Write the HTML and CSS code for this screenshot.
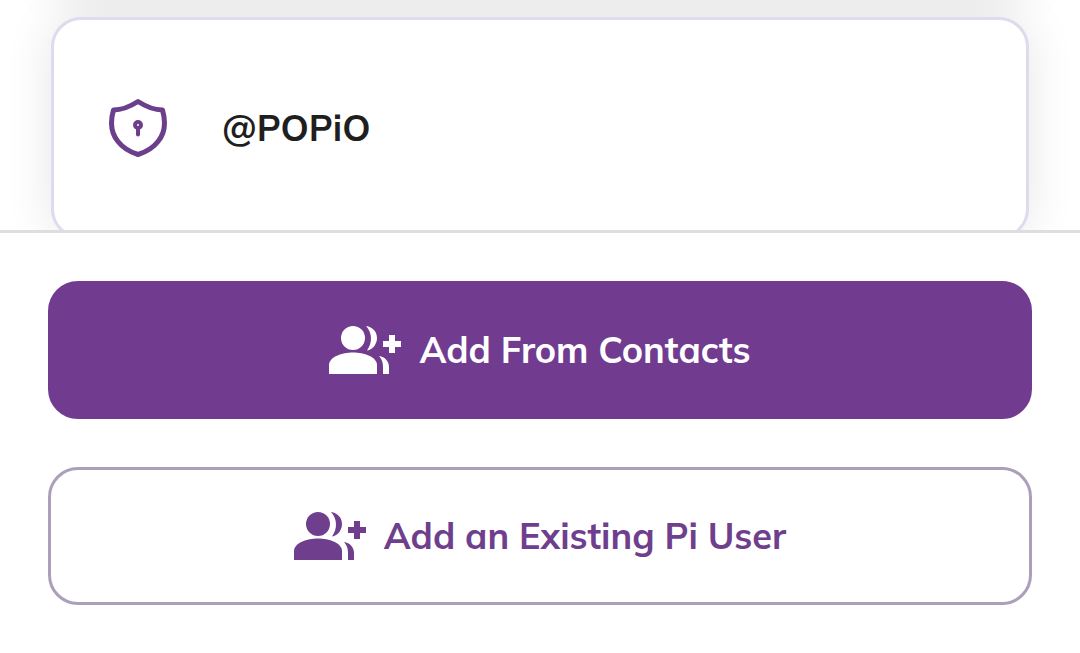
FILE: index.html
```html
<!DOCTYPE html>
<html lang="en">
<head>
    <meta charset="UTF-8">
    <meta name="viewport" content="width=device-width, initial-scale=1.0">
    <title>Add Contacts</title>
    <link rel="stylesheet" href="styles.css">
</head>
<body>
    <svg class="symbols" aria-hidden="true">
        <symbol id="group-add" viewBox="0 0 72 48">
            <circle cx="24" cy="12" r="12"/>
            <path d="M0 48V39C0 31 13 26.500 24 26.500S48 31 48 39V48Z"/>
            <path d="M37 0C44 1 48 6 48 12S44 23.500 38 24.500C43.500 17 43.500 7 37 0Z"/>
            <path d="M50 30C56 31 60 35 60 41V48H54V41C54 37 53 33 50 30Z"/>
            <path d="M60 9h6v6h6v6h-6v6h-6v-6h-6v-6h6z"/>
        </symbol>
    </svg>

    <main class="contacts">
        <div class="card">
            <svg class="shield" viewBox="0 0 60 60" aria-hidden="true">
                <path d="M30 3.500C23 8 15 12 5.500 12C2 24 3 35 10 43.500C15 50 22 54 30 56.500C38 54 45 50 50 43.500C57 35 58 24 54.500 12C45 12 37 8 30 3.500Z"/>
                <circle class="keyhole" cx="30" cy="27" r="3"/>
                <path class="keyhole" d="M30 30V36.500"/>
            </svg>
            <span class="name">@POPiO</span>
        </div>
    </main>

    <footer class="actions">
        <button type="button" class="btn btn-primary">
            <svg class="icon" aria-hidden="true"><use href="#group-add"/></svg>
            <span>Add From Contacts</span>
        </button>
        <button type="button" class="btn btn-outline">
            <svg class="icon" aria-hidden="true"><use href="#group-add"/></svg>
            <span>Add an Existing Pi User</span>
        </button>
    </footer>
</body>
</html>
```
FILE: styles.css
```css
* {
    box-sizing: border-box;
}

body {
    display: flex;
    flex-direction: column;
    height: 100vh;
    margin: 0;
    background-color: #fff;
    font-family: Mulish, Nunito, "Open Sans", sans-serif;
}

.symbols {
    display: none;
}

.contacts {
    flex: 1;
    min-height: 0;
    padding: 17px 51px;
    overflow: hidden;
}

.card {
    display: flex;
    align-items: center;
    gap: 54px;
    padding: 78px 54px;
    border: 3px solid #e0daee;
    border-radius: 30px;
    background-color: #fff;
    box-shadow: 0 0 48px rgba(0, 0, 0, 0.1), 0 -240px 48px rgba(0, 0, 0, 0.1);
}

.shield {
    width: 60px;
    height: 60px;
    fill: none;
    stroke: #6b3f8c;
    stroke-width: 5;
    stroke-linecap: round;
    stroke-linejoin: round;
}

.keyhole {
    stroke-width: 4;
}

.name {
    color: #1f1f1f;
    font-size: 36px;
    font-weight: 700;
    line-height: 60px;
}

.actions {
    display: flex;
    flex-direction: column;
    gap: 48px;
    padding: 48px;
    border-top: 3px solid #dfdde1;
}

.btn {
    display: flex;
    justify-content: center;
    align-items: center;
    gap: 18px;
    width: 100%;
    padding: 42px;
    border: 3px solid #713c90;
    border-radius: 30px;
    font-family: inherit;
    font-size: 36px;
    font-weight: 700;
    line-height: 48px;
}

.btn-primary {
    background-color: #713c90;
    color: #fff;
}

.btn-outline {
    border-color: #ab9fba;
    background-color: #fff;
    color: #6f3f8e;
}

.icon {
    flex: none;
    width: 72px;
    height: 48px;
    fill: currentColor;
}
```
